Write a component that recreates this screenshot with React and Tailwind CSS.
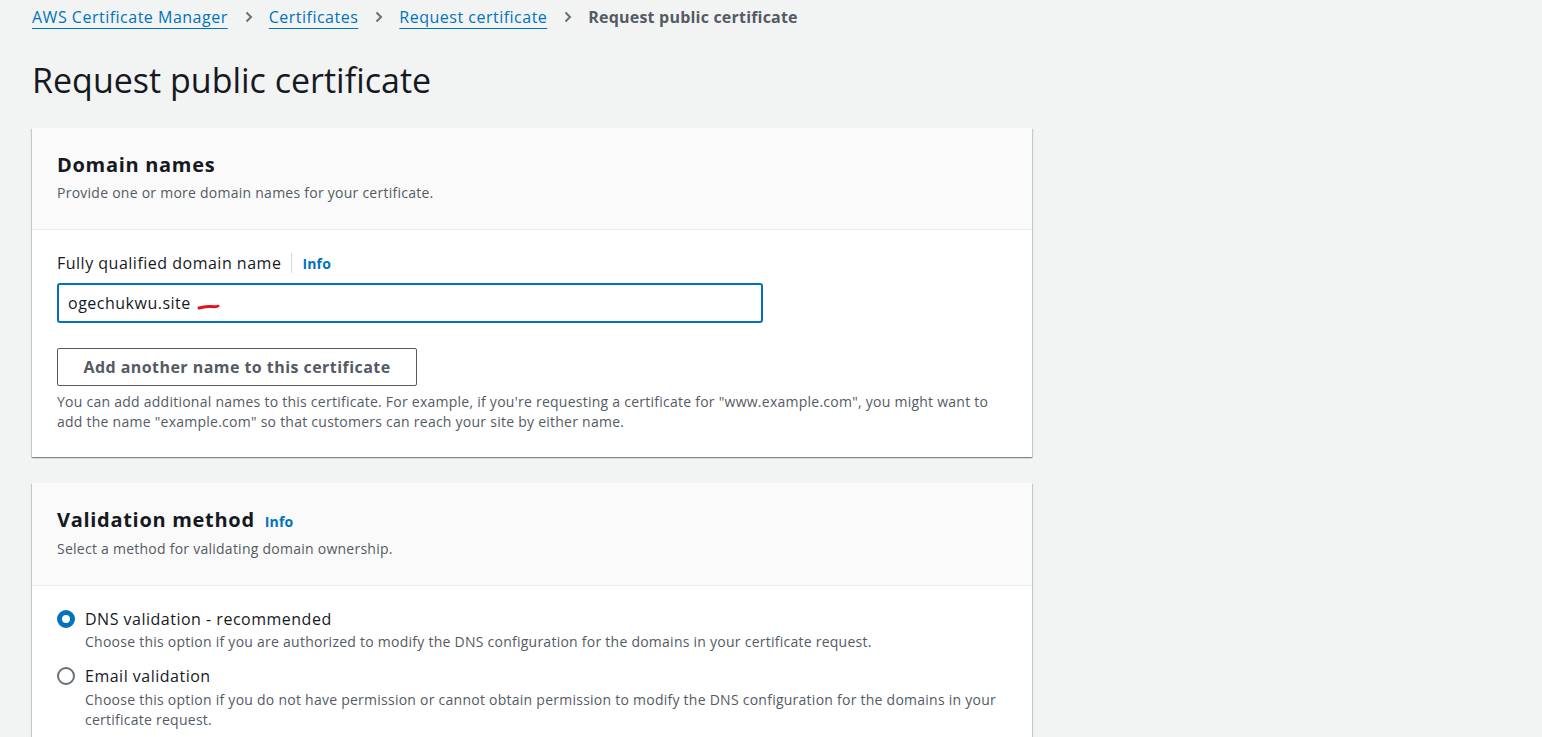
import React from "react";

const font = { fontFamily: '"Open Sans", "Noto Sans", sans-serif' };

function Chevron() {
  return (
    <svg width="12" height="16" viewBox="0 0 12 16" className="ml-[15px] mr-[14px] shrink-0">
      <path d="M3.5 3.5 L8 8 L3.5 12.5" fill="none" stroke="#687078" strokeWidth="2" />
    </svg>
  );
}

const shadow =
  "shadow-[0_1px_1px_0_rgba(0,28,36,0.3),1px_1px_1px_0_rgba(0,28,36,0.15),-1px_1px_1px_0_rgba(0,28,36,0.15)]";

export default function App() {
  return (
    <div className="min-h-[737px] bg-[#f2f3f3] text-[#16191f]" style={font}>
      <div className="pl-8 pt-[5px] w-[1032px]">
        {/* Breadcrumb */}
        <div className="flex items-center h-[24px] text-[16px]">
          <a className="text-[#0073bb] underline underline-offset-[5px] decoration-1 tracking-[0.5px]">AWS Certificate Manager</a>
          <Chevron />
          <a className="text-[#0073bb] underline underline-offset-[5px] decoration-1 tracking-[0.5px]">Certificates</a>
          <Chevron />
          <a className="text-[#0073bb] underline underline-offset-[5px] decoration-1 tracking-[0.5px]">Request certificate</a>
          <Chevron />
          <span className="text-[#545b64] font-bold tracking-[0.2px]">Request public certificate</span>
        </div>

        <h1 className="mt-[30px] text-[34px] leading-[42px] font-normal">Request public certificate</h1>

        {/* Card 1 */}
        <div className={`mt-[27px] bg-white ${shadow}`}>
          <div className="bg-[#fafafa] border-b border-[#eaeded] px-[25px] pt-[23px] pb-[26px]">
            <h2 className="text-[20px] leading-[28px] font-bold tracking-[0.7px]">Domain names</h2>
            <p className="text-[14px] leading-[20px] text-[#545b64] mt-[4px] tracking-[0.25px]">Provide one or more domain names for your certificate.</p>
          </div>
          <div className="px-[25px] pt-[21px] pb-[25px]">
            <div className="flex items-center h-[24px]">
              <span className="text-[16px] tracking-[0.5px]">Fully qualified domain name</span>
              <span className="mx-[10px] h-[20px] w-px bg-[#d5dbdb]" />
              <span className="text-[14px] font-bold text-[#0073bb] tracking-[0.2px]">Info</span>
            </div>
            <div className="mt-[8px] w-[706px] h-[40px] border-2 border-[#0073bb] rounded-[3px] flex items-center pl-[9px]">
              <span className="text-[16px] tracking-[0.5px]">ogechukwu.site</span>
              <svg width="24" height="8" viewBox="0 0 24 8" className="ml-[6px] mt-[8px]">
                <path d="M2 5 Q8 3 14 3.5 T21 3" stroke="#e0141e" strokeWidth="3" fill="none" strokeLinecap="round" />
              </svg>
            </div>
            <button className="mt-[25px] w-[360px] h-[38px] border border-[#545b64] rounded-[2px] text-[16px] font-bold text-[#545b64] bg-white tracking-[0.45px]">
              Add another name to this certificate
            </button>
            <p className="mt-[6px] text-[14px] leading-[20px] text-[#545b64] w-[950px] tracking-[0.25px]">
              You can add additional names to this certificate. For example, if you're requesting a certificate for "www.example.com", you might want to add the name "example.com" so that customers can reach your site by either name.
            </p>
          </div>
        </div>

        {/* Card 2 */}
        <div className={`mt-[26px] bg-white ${shadow}`}>
          <div className="bg-[#fafafa] border-b border-[#eaeded] px-[25px] pt-[23px] pb-[26px]">
            <div className="flex items-baseline">
              <h2 className="text-[20px] leading-[28px] font-bold tracking-[0.7px]">Validation method</h2>
              <span className="ml-[10px] text-[14px] font-bold text-[#0073bb] tracking-[0.2px]">Info</span>
            </div>
            <p className="text-[14px] leading-[20px] text-[#545b64] mt-[5px] tracking-[0.25px]">Select a method for validating domain ownership.</p>
          </div>
          <div className="px-[25px] pt-[21px] pb-[20px]">
            <div className="flex">
              <span className="mt-[3px] w-[18px] h-[18px] rounded-full border-[5px] border-[#0073bb] bg-white shrink-0" />
              <div className="ml-[10px]">
                <div className="text-[16px] leading-[24px] tracking-[0.5px]">DNS validation - recommended</div>
                <div className="mt-[1px] text-[14px] leading-[20px] text-[#545b64] tracking-[0.25px]">Choose this option if you are authorized to modify the DNS configuration for the domains in your certificate request.</div>
              </div>
            </div>
            <div className="flex mt-[12px]">
              <span className="mt-[3px] w-[18px] h-[18px] rounded-full border-2 border-[#687078] bg-white shrink-0" />
              <div className="ml-[10px] w-[925px]">
                <div className="text-[16px] leading-[24px] tracking-[0.5px]">Email validation</div>
                <div className="mt-[2px] text-[14px] leading-[20px] text-[#545b64] tracking-[0.25px]">Choose this option if you do not have permission or cannot obtain permission to modify the DNS configuration for the domains in your certificate request.</div>
              </div>
            </div>
          </div>
        </div>
      </div>
    </div>
  );
}
